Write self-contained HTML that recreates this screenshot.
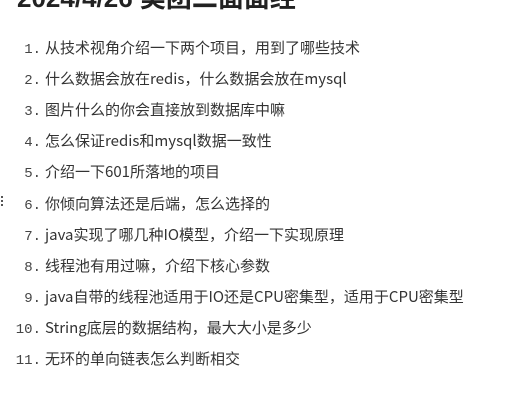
<!DOCTYPE html>
<html><head><meta charset="utf-8"><style>
body{margin:0;width:522px;height:408px;overflow:hidden;background:#fff;position:relative;font-family:"Noto Sans CJK SC",sans-serif;color:#333}
h1{position:absolute;left:17px;top:-17px;margin:0;font-size:26px;font-weight:bold;color:#222;white-space:nowrap;line-height:30px;font-family:"Liberation Sans","Noto Sans CJK SC",sans-serif}
.it{position:absolute;left:0;height:20px;line-height:20px;font-size:15px;white-space:nowrap}
.n{display:inline-block;width:41px;text-align:right;font-family:"Liberation Mono",monospace;font-size:14px;margin-right:4px;color:#444}
.dots{position:absolute;left:1px;top:196px;width:2px}
.dots i{display:block;width:2px;height:2px;background:#555;margin-bottom:2px}
</style></head><body>
<h1>2024/4/26 美团二面面经</h1>
<div class="dots"><i></i><i></i><i></i></div>
<div class="it" style="top:38px"><span class="n">1.</span>从技术视角介绍一下两个项目，用到了哪些技术</div>
<div class="it" style="top:69px"><span class="n">2.</span>什么数据会放在redis，什么数据会放在mysql</div>
<div class="it" style="top:100px"><span class="n">3.</span>图片什么的你会直接放到数据库中嘛</div>
<div class="it" style="top:131px"><span class="n">4.</span>怎么保证redis和mysql数据一致性</div>
<div class="it" style="top:162px"><span class="n">5.</span>介绍一下601所落地的项目</div>
<div class="it" style="top:194px"><span class="n">6.</span>你倾向算法还是后端，怎么选择的</div>
<div class="it" style="top:225px"><span class="n">7.</span>java实现了哪几种IO模型，介绍一下实现原理</div>
<div class="it" style="top:256px"><span class="n">8.</span>线程池有用过嘛，介绍下核心参数</div>
<div class="it" style="top:287px"><span class="n">9.</span>java自带的线程池适用于IO还是CPU密集型，适用于CPU密集型</div>
<div class="it" style="top:318px"><span class="n">10.</span>String底层的数据结构，最大大小是多少</div>
<div class="it" style="top:349px"><span class="n">11.</span>无环的单向链表怎么判断相交</div>
</body></html>
